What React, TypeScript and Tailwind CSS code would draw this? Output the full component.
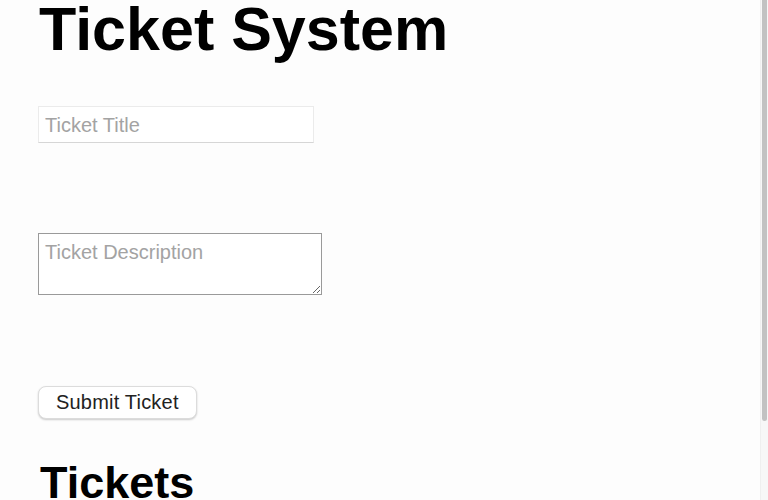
import React from "react";

export default function App() {
  return (
    <div
      className="relative h-[500px] w-full overflow-hidden bg-[#fdfdfd] text-black"
      style={{ fontFamily: '"Liberation Sans", Arial, sans-serif' }}
    >
      <div className="flex flex-col items-start pl-[38px]">
        <h1 className="pl-[1px] text-[61px] font-bold leading-[58px]">Ticket System</h1>
        <input
          type="text"
          placeholder="Ticket Title"
          className="mt-[48px] h-[37px] w-[276px] border border-[#ebebeb] border-b-[#d6d6d6] bg-white px-[6px] pt-[2px] text-[20px] leading-[23px] text-black outline-none placeholder:text-[#a3a3a3]"
        />
        <textarea
          placeholder="Ticket Description"
          className="mt-[90px] block h-[62px] w-[284px] resize-y border border-[#9a9a9a] bg-white px-[6px] pt-[7px] text-[20px] leading-[23px] text-black outline-none placeholder:text-[#a3a3a3]"
        />
        <button className="mt-[91px] h-[33px] rounded-[8px] border border-[#dcdcdc] bg-white px-[17px] text-[20px] leading-[23px] tracking-[0.2px] text-[#222] shadow-[0_1px_2px_rgba(0,0,0,0.2)]">
          Submit Ticket
        </button>
        <h2 className="mt-[41px] pl-[2px] text-[45px] font-bold leading-[45px]">Tickets</h2>
      </div>
      <div className="absolute right-0 top-0 h-full w-[8px] border-l border-[#efefef] bg-[#f7f7f7]">
        <div className="ml-[1px] h-[421px] w-[5px] rounded-b-full bg-[#c2c2c2]" />
      </div>
    </div>
  );
}
